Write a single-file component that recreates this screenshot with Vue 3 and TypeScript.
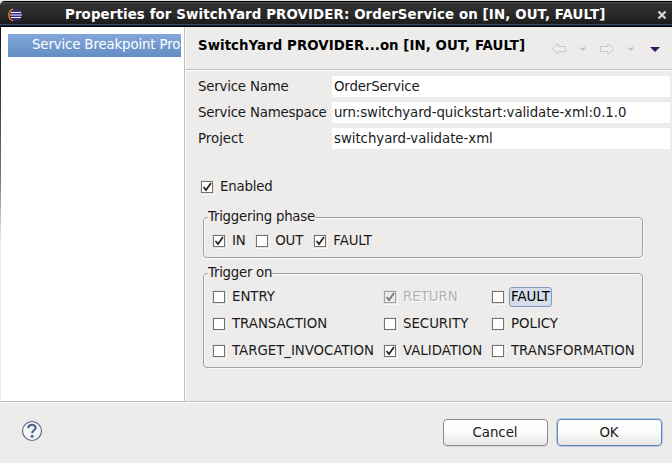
<script setup lang="ts">
import { reactive } from 'vue'

interface Option {
  label: string
  checked: boolean
  disabled?: boolean
  focused?: boolean
}

const fields = [
  { key: 'name', label: 'Service Name', value: 'OrderService' },
  { key: 'namespace', label: 'Service Namespace', value: 'urn:switchyard-quickstart:validate-xml:0.1.0' },
  { key: 'project', label: 'Project', value: 'switchyard-validate-xml' },
]

const enabled = reactive<Option>({ label: 'Enabled', checked: true })

const phases = reactive<Option[]>([
  { label: 'IN', checked: true },
  { label: 'OUT', checked: false },
  { label: 'FAULT', checked: true },
])

const triggers = reactive<Option[]>([
  { label: 'ENTRY', checked: false },
  { label: 'RETURN', checked: true, disabled: true },
  { label: 'FAULT', checked: false, focused: true },
  { label: 'TRANSACTION', checked: false },
  { label: 'SECURITY', checked: false },
  { label: 'POLICY', checked: false },
  { label: 'TARGET_INVOCATION', checked: false },
  { label: 'VALIDATION', checked: true },
  { label: 'TRANSFORMATION', checked: false },
])

function toggle(o: Option) {
  if (!o.disabled) o.checked = !o.checked
}
</script>

<template>
  <div class="dialog">
    <header class="titlebar">
      <svg class="logo" width="14" height="14" viewBox="0 0 14 14">
        <path d="M5.200 1C-.6 3.300-.6 10.700 5.200 13" fill="none" stroke="#f08a1c" stroke-width="1.300" />
        <circle cx="8" cy="7" r="5.900" fill="#3a2c7c" />
        <path d="M3 4.500h10M2 7h12M3 9.500h10" stroke="#f4f2fb" stroke-width="1.200" />
      </svg>
      <h1>Properties for SwitchYard PROVIDER: OrderService on [IN, OUT, FAULT]</h1>
      <svg class="close" width="10" height="10" viewBox="0 0 10 10">
        <path d="M1.500 1.500l7 7M8.500 1.500l-7 7" stroke="#d6d6d4" stroke-width="2.300" />
      </svg>
    </header>

    <div class="body">
      <nav class="tree">
        <div class="node">Service Breakpoint Pro</div>
      </nav>
      <main class="page">
        <div class="pagehead">
          <h2>SwitchYard PROVIDER...on [IN, OUT, FAULT]</h2>
          <svg class="nav" width="112" height="16" viewBox="0 0 112 16">
            <g fill="#f0efee" stroke="#c8c7c5" stroke-linejoin="round">
              <path d="M1.500 8L7 2.500v3h7.500v5H7v3Z" />
              <path d="M62.500 8L57 2.500v3h-7.500v5H57v3Z" />
            </g>
            <path d="M29.500 6.500l2.300 2.300 2.300-2.300M77.500 6.500l2.300 2.300 2.300-2.300" fill="none" stroke="#b9b8b6" stroke-width="1.200" />
            <path d="M99 6h10l-5 5Z" fill="#35185f" />
          </svg>
        </div>
        <div class="content">
          <div class="fields">
            <template v-for="f in fields" :key="f.key">
              <span class="flabel" :class="f.key">{{ f.label }}</span>
              <span class="value" :class="f.key">{{ f.value }}</span>
            </template>
          </div>

          <div class="check enabled" @click="toggle(enabled)">
            <span class="box"><svg v-if="enabled.checked" viewBox="0 0 12 12"><path d="M2.500 6L5 9L10 2" /></svg></span>
            <span class="text">{{ enabled.label }}</span>
          </div>

          <section class="group phase">
            <h3>Triggering phase</h3>
            <div v-for="o in phases" :key="o.label" class="check" @click="toggle(o)">
              <span class="box"><svg v-if="o.checked" viewBox="0 0 12 12"><path d="M2.500 6L5 9L10 2" /></svg></span>
              <span class="text">{{ o.label }}</span>
            </div>
          </section>

          <section class="group trigger">
            <h3>Trigger on</h3>
            <div
              v-for="o in triggers"
              :key="o.label"
              class="check"
              :class="{ disabled: o.disabled, focused: o.focused }"
              @click="toggle(o)"
            >
              <span class="box"><svg v-if="o.checked" viewBox="0 0 12 12"><path d="M2.500 6L5 9L10 2" /></svg></span>
              <span class="text">{{ o.label }}</span>
            </div>
          </section>
        </div>
      </main>
    </div>

    <footer class="footer">
      <svg class="help" width="22" height="22" viewBox="0 0 22 22">
        <circle cx="11" cy="11" r="9.500" fill="#f6f6f6" stroke="#4f6288" stroke-width="1.100" />
        <path d="M7.300 8.300C7.300 3.800 14.800 3.900 14.600 7.900C14.500 10.300 11.200 10.300 11.200 13.300" fill="none" stroke="#4f6288" stroke-width="2.200" />
        <circle cx="11.100" cy="16.200" r="1.500" fill="#4f6288" />
      </svg>
      <button type="button">Cancel</button>
      <button type="button" class="default">OK</button>
    </footer>
  </div>
</template>

<style>
body {
  margin: 0;
  background: #edeceb;
}
</style>

<style scoped>
.dialog {
  width: 672px;
  height: 463px;
  box-sizing: border-box;
  display: flex;
  flex-direction: column;
  overflow: hidden;
  background: #edeceb;
  color: #1a1a1a;
  font: 13.333px/16px "DejaVu Sans", sans-serif;
  white-space: nowrap;
}
h1, h2, h3 {
  margin: 0;
  font-size: inherit;
}
.titlebar {
  flex: none;
  height: 27px;
  box-sizing: border-box;
  display: flex;
  align-items: center;
  padding: 2px 5px 0 8px;
  border-top: 1px solid #dbe1dc;
  border-bottom: 1px solid #000;
  border-radius: 5px 0 0 0;
  background: linear-gradient(#000 0 1px, #484848 1px 2px, #303030 3px, #2b2b2b 12px, #1c1c1c 23px, #3c4c70 23px 24px, #151c2c 24px);
  color: #fff;
}
.titlebar h1 {
  flex: 1;
  padding-left: 43px;
  font-weight: bold;
  letter-spacing: 0.13px;
}
.logo, .close {
  flex: none;
}
.body {
  flex: none;
  height: 374px;
  display: flex;
  padding-left: 1px;
  border-bottom: 1px solid #bdbcba;
  box-shadow: 0 1px #fff;
  background: linear-gradient(#151515, #333 60px, #777 150px, #edeceb 215px) 0 0 / 1px 100% no-repeat;
}
.tree {
  width: 183px;
  box-sizing: border-box;
  padding: 7px 3px 0 7px;
  background: #fff;
}
.node {
  width: 173px;
  height: 23px;
  box-sizing: border-box;
  padding: 3px 0 0 24px;
  background: linear-gradient(#82a7d9, #648dc4);
  color: #fff;
  letter-spacing: -0.14px;
}
.page {
  flex: 1;
  display: flex;
  flex-direction: column;
  border-left: 1px solid #bdbcba;
  box-shadow: inset 1px 0 #fff;
}
.pagehead {
  height: 42px;
  display: flex;
  justify-content: space-between;
  margin-left: 1px;
  padding: 0 9px 0 12px;
  border-bottom: 1px solid #bdbcba;
  box-shadow: 0 1px #fff;
  color: #000;
}
h2 {
  padding-top: 11px;
  letter-spacing: 0.06px;
}
.nav {
  margin: 14px 0 0;
}
.content {
  padding: 6px 2px 0 13px;
}
.fields {
  display: grid;
  grid-template-columns: 134px 1fr;
  row-gap: 5px;
}
.flabel, .value {
  height: 21px;
  line-height: 21px;
}
.flabel {
  letter-spacing: -0.2px;
}
.flabel.project {
  letter-spacing: 0;
}
.value {
  padding-left: 2px;
  background: #fff;
  letter-spacing: -0.09px;
}
.value.name {
  letter-spacing: -0.14px;
}
.value.project {
  letter-spacing: -0.04px;
}
.check {
  display: flex;
  align-items: center;
  height: 21px;
}
.box {
  flex: none;
  width: 12px;
  height: 12px;
  box-sizing: border-box;
  margin-top: 1px;
  border: 1px solid #73726f;
  background: #fff;
  box-shadow: 0 0 0 1px #e3e2e0, 1px 1px 0 1px #f8f8f7;
}
.box svg {
  display: block;
  width: 12px;
  height: 12px;
  margin: -1px;
}
.box path {
  fill: none;
  stroke: #202020;
  stroke-width: 1.7;
}
.text {
  padding: 1px;
  margin-left: 6px;
}
.enabled {
  margin: 27px 0 0 3px;
  letter-spacing: -0.2px;
}
.group {
  position: relative;
  box-sizing: border-box;
  width: 440px;
  margin-left: 5px;
  border: 1px solid #a3a29f;
  border-radius: 4px;
  box-shadow: 1px 1px #fafafa, inset 1px 1px #fafafa;
}
h3 {
  position: absolute;
  top: -9px;
  left: 4px;
  background: #edeceb;
  font-weight: normal;
  letter-spacing: -0.26px;
}
.phase {
  display: flex;
  height: 41px;
  margin-top: 20px;
  padding: 12px 0 0 9px;
  gap: 9.5px;
}
.phase .text {
  letter-spacing: -0.1px;
}
.phase .check:last-child {
  margin-left: 0.5px;
}
.trigger {
  display: grid;
  grid-template-columns: 171px 108px 1fr;
  grid-auto-rows: 21px;
  row-gap: 6px;
  height: 95px;
  margin-top: 15px;
  padding: 12px 0 0 9px;
}
.trigger .text {
  letter-spacing: -0.02px;
}
.disabled .text {
  color: #b3b2b0;
  text-shadow: 1px 1px #fff;
}
.disabled .box {
  border-color: #a3a29f;
  background: #edeceb;
}
.disabled .box path {
  stroke: #777674;
}
.focused .text {
  margin-left: 5px;
  padding: 1px;
  border: 1px solid #829dc2;
  border-radius: 3px;
  background: #d6dde8;
  color: #000;
}
.footer {
  flex: 1;
  display: flex;
  align-items: flex-start;
  padding: 17px 10px 0 21px;
}
.help {
  margin: 1px auto 0 0;
}
button {
  width: 105px;
  height: 27px;
  box-sizing: border-box;
  margin: 0;
  border: 1px solid #8d8c89;
  border-radius: 4px;
  padding: 0 1px 0 0;
  background: linear-gradient(#fff, #fcfcfc 50%, #e6e5e4);
  box-shadow: 0 1px #dad9d8;
  font: inherit;
  color: #1a1a1a;
}
.default {
  margin-left: 9px;
  border-color: #5f83b6;
  box-shadow: 0 0 0 1px #b8cbe4;
}
</style>
